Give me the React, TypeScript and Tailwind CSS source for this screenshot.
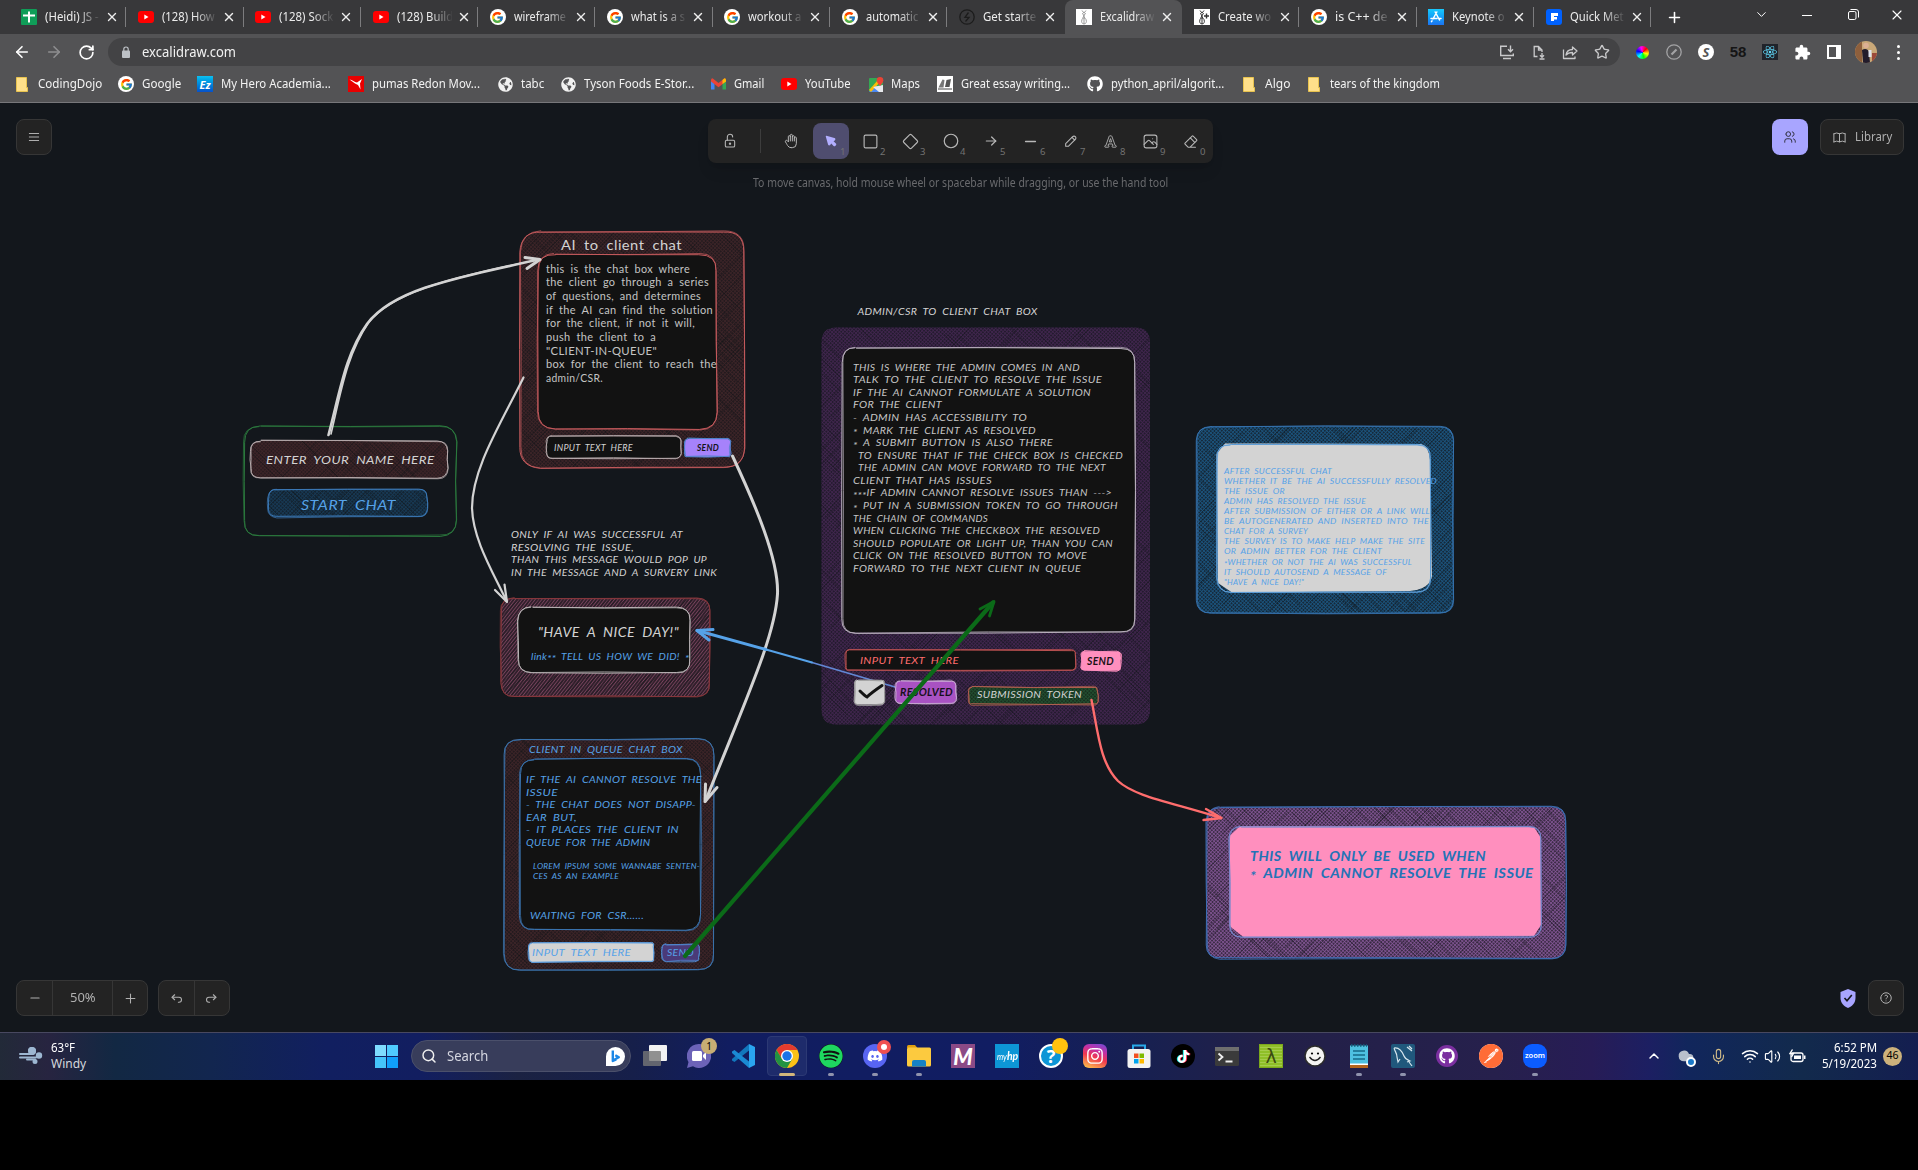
import React, { useLayoutEffect, useRef, useState } from "react";
import { FcGoogle } from "react-icons/fc";
import { FaFont, FaGithub, FaSpotify, FaDiscord, FaInstagram, FaTiktok, FaGlobeAmericas, FaReact } from "react-icons/fa";
import { MdExtension } from "react-icons/md";
import { SiPostman } from "react-icons/si";
import {
  TbLockOpen, TbHandStop, TbSquare, TbSquareRotated, TbCircle, TbArrowRight, TbMinus, TbPlus,
  TbPencil, TbPhoto, TbEraser, TbMenu2, TbUsers, TbBook, TbArrowBackUp, TbArrowForwardUp, TbHelp, TbPointerFilled,
} from "react-icons/tb";
import {
  ArrowLeft, ArrowRight, RotateCw, X, Plus, Minus, ChevronDown, ChevronUp, Star,
  Search, Wifi, Volume2, Mic, Cloud,
} from "lucide-react";

/* Single line of text squeezed or stretched to a given width. */
function Fit({ w, className = "", children }: { w: number; className?: string; children: React.ReactNode }) {
  const ref = useRef<HTMLSpanElement>(null);
  const [k, setK] = useState(1);
  useLayoutEffect(() => {
    if (ref.current && ref.current.offsetWidth) setK(w / ref.current.offsetWidth);
  }, [w]);
  return (
    <span className={"inline-block shrink-0 whitespace-nowrap " + className} style={{ width: w }}>
      <span ref={ref} className="inline-block origin-left" style={{ transform: `scaleX(${k})` }}>
        {children}
      </span>
    </span>
  );
}

/* ---------- small brand marks ---------- */
const GoogleDot = () => (
  <span className="flex size-4 items-center justify-center rounded-full bg-white"><FcGoogle size={13} /></span>
);
const YouTubeMark = () => (
  <svg width="16" height="16" viewBox="0 0 16 16"><rect y="2" width="16" height="12" rx="3" fill="#f00" /><path d="M6.3 5.5v5L10.5 8z" fill="#fff" /></svg>
);
const Sheets = () => (
  <svg width="16" height="16" viewBox="0 0 16 16"><rect width="16" height="16" rx="1" fill="#0f9d58" /><path d="M7 2.500h2v3h5v2H9v6H7v-6H2v-2h5z" fill="#fff" /></svg>
);
const Slash = () => (
  <svg width="16" height="16" viewBox="0 0 16 16" fill="none" stroke="#1c1c1c"><circle cx="8" cy="8" r="7.2" strokeWidth="1.300" /><path d="M9.500 3.500 6 8.300h4L6.500 12.500" strokeWidth="1.300" /></svg>
);
const Pen = ({ plus = false }: { plus?: boolean }) => (
  <svg width="16" height="16" viewBox="0 0 16 16" fill="none" stroke={plus ? "#333" : "#999"}>
    <rect width="16" height="16" fill="#fff" stroke="none" />
    <path d="M6 1.500 8 4l2-2.500M6.500 4 9 9.500M9.500 4 6.500 9.500M8 9v6M6 10.500c-1 3 0 4 2 4.500 2-.5 3-1.500 2-4.500l-2-2z" strokeWidth="1" />
    {plus && <path d="M10 7h5M12.500 4.500v5" strokeWidth="1.400" />}
  </svg>
);
const AppStore = () => (
  <span className="flex size-4 items-center justify-center bg-gradient-to-b from-[#1ac8fb] to-[#1d74f2] text-white">
    <svg width="12" height="12" viewBox="0 0 12 12" fill="none" stroke="#fff" strokeWidth="1.500" strokeLinecap="round"><path d="M6.800 1 3 8M5.200 1 9.500 9M1 7.500h6M9 7.500h2M2 9.800l-.5.800" /></svg>
  </span>
);
const FMark = () => (
  <svg width="16" height="16" viewBox="0 0 16 16"><rect width="16" height="16" rx="3" fill="#0061fe" /><path d="M5 4h7v3H8v1h3v2.500H8V12H5z" fill="#fff" /></svg>
);
const Folder = () => (
  <svg width="12" height="15" viewBox="0 0 12 15"><path d="M.5.500h10v10h1v4H.5z" fill="#ffe08a" stroke="#e8c34f" /></svg>
);
const GlobeMark = () => (
  <span className="flex size-4 items-center justify-center rounded-full"><FaGlobeAmericas size={15} color="#f1f1f1" /></span>
);
const EZ = () => (
  <span className="flex size-4 items-center justify-center bg-gradient-to-b from-[#10c0f0] to-[#0a50c8] text-[11px] font-bold italic leading-none text-white">Ez</span>
);
const Puma = () => (
  <svg width="16" height="16" viewBox="0 0 16 16"><rect width="16" height="16" fill="#e80000" /><path d="M1.500 3.500c3 0 5 3 7.500 3l5-3.500-2 4.500.5 6-2.500-4.500-3-1.500z" fill="#fff" /></svg>
);
const GmailMark = () => (
  <svg width="15" height="12" viewBox="0 0 15 12"><path d="M0 2v9.500h3.500V5z" fill="#4285f4" /><path d="M15 2v9.500h-3.500V5z" fill="#34a853" /><path d="M0 2Q0 .3 1.500.3L7.500 5l6-4.700Q15 .3 15 2v1.500L7.500 9.200 0 3.500z" fill="#ea4335" /><path d="M11.500 2 13.500.3Q15 .3 15 2v1.500L11.500 6z" fill="#fbbc04" /></svg>
);
const MapsMark = () => (
  <svg width="15" height="15" viewBox="0 0 15 15"><rect y="1" width="14" height="14" rx="1" fill="#34a853" /><path d="m0 15 7-7 7 7z" fill="#4a89f3" /><path d="m0 13 9-10 2 2-9 10z" fill="#fbbc05" /><path d="m4 10 6 5h4V8z" fill="#e8eaed" /><path d="M11 0a3.300 3.300 0 0 1 3.300 3.300C14.300 6 11 9 11 9S7.700 6 7.700 3.300A3.300 3.300 0 0 1 11 0z" fill="#ea4335" /></svg>
);
const Essay = () => (
  <svg width="16" height="16" viewBox="0 0 16 16"><rect width="16" height="16" fill="#fff" /><path d="m1.500 11.500 4-8 2 .5-1 7.500z" fill="#777" /><path d="m8 11 1.500-7 4.500-1-1.500 8z" fill="#555" /><path d="M1 12.500h14v1H1z" fill="#444" /></svg>
);

/* ---------- browser chrome ---------- */
const tabs: [React.ReactNode, string, number][] = [
  [<Sheets />, "(Heidi) JS -", 54], [<YouTubeMark />, "(128) How", 53], [<YouTubeMark />, "(128) Sock", 54],
  [<YouTubeMark />, "(128) Build", 56], [<GoogleDot />, "wireframe", 52], [<GoogleDot />, "what is a s", 54],
  [<GoogleDot />, "workout a", 53], [<GoogleDot />, "automatic", 52], [<Slash />, "Get starte", 53],
  [<Pen />, "Excalidraw", 54], [<Pen plus />, "Create wo", 53], [<GoogleDot />, "is C++ de", 53],
  [<AppStore />, "Keynote o", 53], [<FMark />, "Quick Met", 54],
];

function TabStrip() {
  return (
    <div className="flex h-[34px] bg-[#38383a] pl-[9px] text-[12.500px] text-[#ececec]">
      {tabs.map(([icon, label, w], i) => {
        const active = i === 9;
        return (
          <div key={i} className={"relative flex w-[117.300px] shrink-0 items-center pl-[11.700px] " + (active ? "rounded-t-lg bg-[#535355]" : "")}>
            <span className="shrink-0">{icon}</span>
            <div className="ml-2 w-[57px] shrink-0 overflow-hidden [mask-image:linear-gradient(to_right,#000_58%,transparent_98%)]">
              <Fit w={w}>{label}</Fit>
            </div>
            <X size={14} strokeWidth={2.400} className="ml-[3px] shrink-0" color="#eee" />
            {!active && i !== 8 && <div className="absolute right-0 top-[7px] h-5 w-px bg-[#7c7c7e]" />}
          </div>
        );
      })}
      <div className="flex w-[46px] items-center justify-center"><Plus size={17} strokeWidth={2.200} color="#fff" /></div>
      <div className="ml-auto flex h-[29px] items-center text-white">
        <div className="flex w-[46px] justify-center"><ChevronDown size={15} strokeWidth={1.600} /></div>
        <div className="flex w-[46px] justify-center"><svg width="10" height="10" viewBox="0 0 10 10"><path d="M0 5.500h10" stroke="#fff" /></svg></div>
        <div className="flex w-[46px] justify-center"><svg width="11" height="11" viewBox="0 0 11 11" fill="none" stroke="#fff"><rect x=".5" y="2.500" width="7.500" height="8" rx="1.500" /><path d="M2.500.500h5.500a2.500 2.500 0 0 1 2.500 2.500v5.500" /></svg></div>
        <div className="flex w-[42px] justify-center"><X size={16} strokeWidth={1.700} /></div>
      </div>
    </div>
  );
}

const wheel = "bg-[conic-gradient(#f00,#ff0,#0f0,#0ff,#00f,#f0f,#f00)]";

function AddressRow() {
  return (
    <div className="flex h-9 items-center bg-[#535355] pl-[13px] text-white">
      <ArrowLeft size={18} strokeWidth={2.200} />
      <ArrowRight size={18} strokeWidth={2.200} color="#8e8e90" className="ml-[14px]" />
      <RotateCw size={17} strokeWidth={2.400} className="ml-[15px]" />
      <div className="ml-[13px] flex h-7 w-[1512px] items-center rounded-full bg-[#434345] pl-[14px] pr-[10px]">
        <svg width="8" height="12" viewBox="0 0 8 12"><rect y="4.500" width="8" height="7.500" rx="1" fill="#bdc1c6" /><path d="M1.800 5V3.200a2.200 2.200 0 0 1 4.400 0V5" fill="none" stroke="#bdc1c6" strokeWidth="1.200" /></svg>
        <Fit w={94} className="ml-3 text-sm text-[#f1f1f1]">excalidraw.com</Fit>
        <div className="ml-auto flex items-center gap-4 text-[#c9c9cb]">
          <svg width="16" height="15" viewBox="0 0 16 15" fill="none" stroke="currentColor" strokeWidth="1.400"><path d="M8 1.200H1.700v9.300h12.600V8.500M11.500.500v6M9 4.300l2.500 2.500L14 4.300M4 13.500h8" /></svg>
          <svg width="15" height="15" viewBox="0 0 15 15" fill="none" stroke="currentColor" strokeWidth="1.300"><path d="M6.500 11.500H3.200v-10h4.300L11 5v2M7.500 1.500V5H11M11 8v4M9 10.300l2 2 2-2M8.500 14h5" /></svg>
          <svg width="16" height="15" viewBox="0 0 16 15" fill="none" stroke="currentColor" strokeWidth="1.300" strokeLinejoin="round"><path d="M1.500 4.500v9h11.500V11.500M4 10c.5-3.500 3-5.500 6.500-5.500V2L15 6l-4.500 4V7.500C7.500 7.500 5.500 8.300 4 10z" /></svg>
          <Star size={16} strokeWidth={2} />
        </div>
      </div>
      <div className="ml-[6px] flex items-center">
        <div className="flex w-8 justify-center"><span className={"size-[13px] rotate-45 rounded-full " + wheel} /></div>
        <div className="flex w-8 justify-center"><svg width="16" height="16" viewBox="0 0 16 16" fill="none" stroke="#a3a3a5"><circle cx="8" cy="8" r="7.200" strokeWidth="1.300" /><path d="m5.500 10.500 5-5" strokeWidth="2.200" /></svg></div>
        <div className="flex w-8 justify-center"><span className="flex size-4 items-center justify-center rounded-full bg-white text-[13px] font-bold italic leading-none text-[#555]">S</span></div>
        <div className="flex w-8 justify-center font-['Liberation_Sans'] text-[15px] font-bold text-[#151515]">58</div>
        <div className="flex w-8 justify-center"><span className="flex size-4 items-center justify-center bg-[#20232a]"><FaReact size={14} color="#61dafb" /></span></div>
        <div className="flex w-8 justify-center"><MdExtension size={17} color="#fff" /></div>
        <div className="flex w-8 justify-center"><span className="h-[14px] w-[14px] border-2 border-r-[5px] border-white" /></div>
        <div className="flex w-8 justify-center">
          <svg width="22" height="22" viewBox="0 0 22 22"><clipPath id="av"><circle cx="11" cy="11" r="11" /></clipPath><g clipPath="url(#av)"><rect width="22" height="22" fill="#c9a878" /><path d="M0 0h7v22H0z" fill="#8e5f3c" /><circle cx="11" cy="4.500" r="2.800" fill="#dcb094" /><path d="M7 9c3-2 6-1 7 2l1 11H8z" fill="#221c2c" /><path d="M13.500 9h3v7h-3z" fill="#dfe3ee" /><path d="M17 12h5v10h-5z" fill="#9c4a3a" /></g></svg>
        </div>
        <div className="flex w-8 flex-col items-center gap-[3px]"><i className="size-[3px] rounded-full bg-white" /><i className="size-[3px] rounded-full bg-white" /><i className="size-[3px] rounded-full bg-white" /></div>
      </div>
    </div>
  );
}

const bookmarks: [React.ReactNode, string, number, number, number][] = [
  /* icon, label, icon cell width, text width, gap after */
  [<Folder />, "CodingDojo", 22, 64, 16], [<GoogleDot />, "Google", 24, 39, 16], [<EZ />, "My Hero Academia...", 24, 110, 17],
  [<Puma />, "pumas Redon Mov...", 24, 108, 17], [<GlobeMark />, "tabc", 24, 23, 16], [<GlobeMark />, "Tyson Foods E-Stor...", 24, 110, 17],
  [<GmailMark />, "Gmail", 23, 30, 17], [<YouTubeMark />, "YouTube", 24, 46, 18], [<MapsMark />, "Maps", 22, 29, 17],
  [<Essay />, "Great essay writing...", 24, 109, 17], [<FaGithub size={16} color="#fff" />, "python_april/algorit...", 24, 113, 19],
  [<Folder />, "Algo", 22, 25, 18], [<Folder />, "tears of the kingdom", 22, 110, 0],
];

function Bookmarks() {
  return (
    <div className="flex h-[33px] items-center border-b border-[#77777a] bg-[#535355] pb-[4px] pl-4 text-[12.500px] text-[#f3f3f3]">
      {bookmarks.map(([icon, label, iw, tw, gap], i) => (
        <div key={i} className="flex shrink-0 items-center" style={{ marginRight: gap }}>
          <span className="flex shrink-0 items-center" style={{ width: iw }}>{icon}</span>
          <Fit w={tw}>{label}</Fit>
        </div>
      ))}
    </div>
  );
}

/* ---------- whiteboard drawing ---------- */
function rng(seed: number) {
  let s = seed * 9301 + 49297;
  return () => {
    s = (s * 9301 + 49297) % 233280;
    return s / 233280 - 0.5;
  };
}

function roughPath(x: number, y: number, x2: number, y2: number, r: number, seed: number, amp: number) {
  const q = rng(seed);
  const j = () => q() * amp;
  const mx = (x + x2) / 2, my = (y + y2) / 2;
  return `M${x + r + j()} ${y + j()}Q${mx} ${y + j() * 2} ${x2 - r + j()} ${y + j()}Q${x2 + j()} ${y + j()} ${x2 + j()} ${y + r + j()}Q${x2 + j() * 2} ${my} ${x2 + j()} ${y2 - r + j()}Q${x2 + j()} ${y2 + j()} ${x2 - r + j()} ${y2 + j()}Q${mx} ${y2 + j() * 2} ${x + r + j()} ${y2 + j()}Q${x + j()} ${y2 + j()} ${x + j()} ${y2 - r + j()}Q${x + j() * 2} ${my} ${x + j()} ${y + r + j()}Q${x + j()} ${y + j()} ${x + r + j()} ${y + j()}`;
}

type BoxProps = { b: [number, number, number, number]; r?: number; stroke?: string; fill?: string; hatch?: string; seed?: number; streaks?: number; single?: boolean };

function Box({ b: [x, y, x2, y2], r = 12, stroke = "none", fill = "none", hatch, seed = 1, streaks = 0, single }: BoxProps) {
  const q = rng(seed + 40);
  const id = `clip${seed}`;
  return (
    <g>
      <path d={roughPath(x, y, x2, y2, r, seed, 0)} fill={fill} />
      {hatch && <path d={roughPath(x, y, x2, y2, r, seed, 0)} fill={`url(#${hatch})`} />}
      {streaks > 0 && (
        <g clipPath={`url(#${id})`}>
          <clipPath id={id}><path d={roughPath(x, y, x2, y2, r, seed, 0)} /></clipPath>
          {Array.from({ length: streaks }, (_, i) => {
            const cx = x + (q() + 0.5) * (x2 - x), cy = y + (q() + 0.5) * (y2 - y);
            const l = 12 + (q() + 0.5) * 30;
            const d = single || i % 2 ? 1 : -1;
            return <path key={i} d={`M${cx - l} ${cy + l * d}L${cx + l} ${cy - l * d}`} stroke="#14171b" strokeOpacity=".42" strokeWidth="1" />;
          })}
        </g>
      )}
      {stroke !== "none" && (
        <g fill="none" stroke={stroke} strokeWidth="1">
          <path d={roughPath(x, y, x2, y2, r, seed + 2, 1.600)} />
          <path d={roughPath(x, y, x2, y2, r, seed + 7, 2)} strokeOpacity=".75" />
        </g>
      )}
    </g>
  );
}

function Hatch({ id, c, single, w = 1 }: { id: string; c: string; single?: boolean; w?: number }) {
  return (
    <pattern id={id} width="2.600" height="2.600" patternUnits="userSpaceOnUse" patternTransform={single ? "rotate(38)" : "rotate(43)"}>
      <path d="M0 0V2.600" stroke={c} strokeWidth={w * 1.600} />
      {!single && <path d="M0 0H2.600" stroke={c} strokeWidth={w * 1.600} />}
    </pattern>
  );
}

/* Lines are [text, start x, end x, baseline]. Asterisks sit at mid height of the capitals. */
type Line = [string, number, number, number];
function Lines({ rows, size, fill, bold, upright }: { rows: Line[]; size: number; fill: string; bold?: boolean; upright?: boolean }) {
  const drop = size * 0.26;
  return (
    <g fill={fill} fontSize={size * 0.95} fontFamily="Lato, sans-serif" fontStyle={upright ? "normal" : "italic"} fontWeight={bold ? 700 : 400} wordSpacing={size * 0.24} letterSpacing={size * 0.03}>
      {rows.map(([t, x, x2, y], i) => (
        <text key={i} x={x} y={y + 0.5} textLength={x2 - x} lengthAdjust="spacingAndGlyphs">
          {t.includes("*")
            ? t.split(/(\*+)/).filter(Boolean).map((p, k, all) => (
                <tspan key={k} dy={p[0] === "*" ? drop : k > 0 && all[k - 1][0] === "*" ? -drop : 0}>{p}</tspan>
              ))
            : t}
        </text>
      ))}
    </g>
  );
}

const adminRows: Line[] = ([
  ["THIS IS WHERE THE ADMIN COMES IN AND", 853, 1080], ["TALK TO THE CLIENT TO RESOLVE THE ISSUE", 853, 1102],
  ["IF THE AI CANNOT FORMULATE A SOLUTION", 853, 1091], ["FOR THE CLIENT", 853, 942], ["- ADMIN HAS ACCESSIBILITY TO", 853, 1027],
  ["* MARK THE CLIENT AS RESOLVED", 853, 1036], ["* A SUBMIT BUTTON IS ALSO THERE", 853, 1053],
  ["TO ENSURE THAT IF THE CHECK BOX IS CHECKED", 858, 1123], ["THE ADMIN CAN MOVE FORWARD TO THE NEXT", 858, 1106],
  ["CLIENT THAT HAS ISSUES", 853, 992], ["***IF ADMIN CANNOT RESOLVE ISSUES THAN --->", 853, 1112],
  ["* PUT IN A SUBMISSION TOKEN TO GO THROUGH", 853, 1118], ["THE CHAIN OF COMMANDS", 853, 988],
  ["WHEN CLICKING THE CHECKBOX THE RESOLVED", 853, 1100], ["SHOULD POPULATE OR LIGHT UP, THAN YOU CAN", 853, 1113],
  ["CLICK ON THE RESOLVED BUTTON TO MOVE", 853, 1087], ["FORWARD TO THE NEXT CLIENT IN QUEUE", 853, 1081],
] as [string, number, number][]).map(([t, a, b], i) => [t, a, b, 370.300 + i * 12.560]);

const surveyRows: Line[] = ([
  ["AFTER SUCCESSFUL CHAT", 1332], ["WHETHER IT BE THE AI SUCCESSFULLY RESOLVED", 1437], ["THE ISSUE OR", 1285],
  ["ADMIN HAS RESOLVED THE ISSUE", 1366], ["AFTER SUBMISSION OF EITHER OR A LINK WILL", 1430], ["BE AUTOGENERATED AND INSERTED INTO THE", 1429],
  ["CHAT FOR A SURVEY", 1308], ["THE SURVEY IS TO MAKE HELP MAKE THE SITE", 1425], ["OR ADMIN BETTER FOR THE CLIENT", 1382],
  ["*WHETHER OR NOT THE AI WAS SUCCESSFUL", 1412], ["IT SHOULD AUTOSEND A MESSAGE OF", 1387], ["\"HAVE A NICE DAY!\"", 1304],
] as [string, number][]).map(([t, b], i) => [t, 1224, b, 473 + i * 10.120]);

const aiRows: Line[] = ([
  ["this is the chat box where", 690], ["the client go through a series", 709], ["of questions, and determines", 701],
  ["if the AI can find the solution", 713], ["for the client, if not it will,", 695], ["push the client to a", 656],
  ["\"CLIENT-IN-QUEUE\"", 657], ["box for the client to reach the", 717], ["admin/CSR.", 603],
] as [string, number][]).map(([t, b], i) => [t, 546, b, 272 + i * 13.700]);

const PALE = "#d3d3d3";
const BLUE = "#56a2e8";

function Drawing() {
  return (
    <svg className="block h-[929px] w-[1918px]" viewBox="0 103 1918 929">
      <defs>
        <Hatch id="hRed" c="#3e2428" />
        <Hatch id="hBlue" c="#173a56" />
        <Hatch id="hBlue2" c="#1b5580" />
        <Hatch id="hPurple" c="#42264f" />
        <Hatch id="hViolet" c="#8a5a9d" w={0.850} />
        <Hatch id="hPink" c="#7d4560" single />
        <Hatch id="hGreen" c="#225030" />
      </defs>

      <Box b={[244, 426, 456, 536]} r={16} stroke="#2b7a3d" seed={3} />
      <Box b={[250.500, 441, 447.500, 478]} r={10} fill="#2a1c20" hatch="hRed" stroke="#b5a9ab" seed={5} streaks={30} />
      <Lines rows={[["ENTER YOUR NAME HERE", 266, 434.500, 463]]} size={12.500} fill={PALE} />
      <Box b={[268.500, 489, 427, 517]} r={8} fill="#142433" hatch="hBlue" stroke="#3b78b5" seed={6} streaks={24} />
      <Lines rows={[["START CHAT", 301, 396, 509]]} size={13.500} fill={BLUE} />

      <Box b={[520.500, 231.500, 744, 467.500]} r={20} fill="#231a1e" hatch="hRed" stroke="#c45a5c" seed={11} streaks={110} />
      <Lines rows={[["AI to client chat", 561, 682, 249.500]]} size={14.500} fill={PALE} upright />
      <Box b={[538, 254, 716.500, 429]} r={17} fill="#121212" stroke="#c4595c" seed={12} />
      <Lines rows={aiRows} size={11.500} fill="#c4c4c4" upright />
      <Box b={[546.500, 436.500, 680.500, 458]} r={5} fill="#121212" stroke="#b5a9ab" seed={14} />
      <Lines rows={[["INPUT TEXT HERE", 554, 633, 450.500]]} size={9} fill={PALE} />
      <Box b={[685, 439, 730.500, 457]} r={3} fill="#a682fb" stroke="#4f82c9" seed={15} />
      <Lines rows={[["SEND", 697, 719, 450]]} size={9} fill="#141318" bold />

      <Lines size={11} fill={PALE} rows={[
        ["ONLY IF AI WAS SUCCESSFUL AT", 511, 683, 537], ["RESOLVING THE ISSUE,", 511, 634, 550],
        ["THAN THIS MESSAGE WOULD POP UP", 511, 707, 562.500], ["IN THE MESSAGE AND A SURVERY LINK", 511, 717, 575],
      ]} />
      <Box b={[501, 598, 710, 696]} r={13} fill="#30202b" hatch="hPink" stroke="#87373c" seed={21} streaks={80} single />
      <Box b={[518, 607, 690.500, 673]} r={14} fill="#121212" stroke="#b9b3b5" seed={22} />
      <Lines rows={[["\"HAVE A NICE DAY!\"", 538, 679, 636.500]]} size={14.500} fill={PALE} />
      <Lines rows={[["link** TELL US HOW WE DID! *", 531, 689.500, 659]]} size={11} fill={BLUE} />

      <Box b={[504, 739, 714, 970]} r={16} fill="#231a1e" hatch="hRed" stroke="#3a71aa" seed={31} streaks={100} />
      <Lines rows={[["CLIENT IN QUEUE CHAT BOX", 529, 683, 752]]} size={11} fill={BLUE} />
      <Box b={[520, 759, 701, 930]} r={15} fill="#121212" stroke="#3a73ae" seed={32} />
      <Lines size={11} fill={BLUE} rows={[
        ["IF THE AI CANNOT RESOLVE THE", 526, 702, 782], ["ISSUE", 526, 558, 795], ["- THE CHAT DOES NOT DISAPP-", 526, 696, 807.500],
        ["EAR BUT,", 526, 577, 820], ["- IT PLACES THE CLIENT IN", 526, 679, 832.500], ["QUEUE FOR THE ADMIN", 526, 650.500, 845],
        ["WAITING FOR CSR......", 530, 644, 918],
      ]} />
      <Lines size={8.500} fill={BLUE} rows={[["LOREM IPSUM SOME WANNABE SENTEN-", 533, 700, 868.500], ["CES AS AN EXAMPLE", 533, 619, 878.500]]} />
      <Box b={[529, 943, 654, 962]} r={3} fill={PALE} stroke="#5d9fe0" seed={33} />
      <Lines rows={[["INPUT TEXT HERE", 532, 631, 955]]} size={11} fill={BLUE} />
      <Box b={[662, 944, 699, 961]} r={4} fill="#4a3a78" stroke="#4f86cc" seed={35} />
      <Lines rows={[["SEND", 667, 694, 955.500]]} size={11} fill={BLUE} />

      <Lines rows={[["ADMIN/CSR TO CLIENT CHAT BOX", 857.500, 1037.500, 314.500]]} size={10.800} fill={PALE} />
      <Box b={[821.500, 327.500, 1150, 724.500]} r={15} fill="#231b2e" hatch="hPurple" seed={41} streaks={180} />
      <Box b={[842, 348, 1135, 632.500]} r={14} fill="#121212" stroke="#b9b0bd" seed={42} />
      <Lines rows={adminRows} size={10.600} fill="#c6c6c6" />
      <Box b={[845.500, 650, 1076, 670]} r={4} fill="#121212" stroke="#bd5252" seed={43} />
      <Lines rows={[["INPUT TEXT HERE", 860, 959, 663.500]]} size={10.500} fill="#ff6d6d" />
      <Box b={[1081.500, 651.500, 1120.500, 670.500]} r={3} fill="#ff8fbe" stroke="#ff8fbe" seed={44} />
      <Lines rows={[["SEND", 1087, 1114, 664]]} size={11} fill="#1a1216" bold />

      <Box b={[1197, 426.500, 1453.500, 613.500]} r={14} fill="#16293a" hatch="hBlue2" stroke="#3572ad" seed={51} streaks={90} />
      <path d="M1225 443.500 1421 444Q1429 446 1430 460L1432 576Q1430 589 1410 591L1232 592.500 1218 583 1216.500 454Z" fill={PALE} />
      <Box b={[1217, 444.500, 1430.500, 592]} r={14} stroke="#5d9ed8" seed={52} />
      <Lines rows={surveyRows} size={8.800} fill={BLUE} />

      <Box b={[1206.500, 807, 1565.500, 958.500]} r={14} fill="#3b2b45" hatch="hViolet" stroke="#3c6fb5" seed={61} streaks={120} />
      <path d="M1240 826 1534 827 1541 838V925L1534 936 1244 937.500 1229.500 926V836Z" fill="#ff8fbe" />
      <Box b={[1229.500, 827, 1541, 937]} r={12} stroke="#7588cc" seed={62} />
      <Lines size={14} fill="#2373b6" bold rows={[["THIS WILL ONLY BE USED WHEN", 1250, 1486, 860], ["* ADMIN CANNOT RESOLVE THE ISSUE", 1250, 1533.500, 877]]} />

      {/* connectors */}
      <g fill="none" stroke={PALE} strokeWidth="2.600" strokeLinecap="round" strokeLinejoin="round">
        <path d="M328.500 435C340 392 345 355 367 324C391 292 440 281 539 259.500" />
        <path d="M331 434C341 392 347 354 369 322C392 294 441 280 520 263.500" strokeWidth="1.600" />
        <path d="M525 257.500 540 259.500 527 268.500" strokeWidth="3" />
        <path d="M523.500 377.500C500 425 472 469 472 508C473 540 493 572 506.500 601" strokeWidth="2.200" />
        <path d="M495 590 507 602 504.500 584.500" strokeWidth="2.200" />
        <path d="M732.500 456C755 504 779 560 777.500 594C775 636 748 694 705.500 801" strokeWidth="3" />
        <path d="M705.500 784 705 801.500 717 787.500" strokeWidth="3" />
      </g>
      <g fill="none" stroke={BLUE} strokeLinecap="round" strokeLinejoin="round">
        <path d="M895 687 812 662.500" stroke="#6287d4" strokeWidth="1.800" />
        <path d="M812 662.500 766 649.500" strokeWidth="2" />
        <path d="M766 649.500 697 630.500" strokeWidth="3" />
        <path d="M713 629.500 697 630.500 709 640" strokeWidth="3" />
      </g>
      <Box b={[854.500, 680, 884, 704.500]} r={3} fill={PALE} stroke="#9c9c9c" seed={71} />
      <path d="M860 691Q865 696 867 697Q871 693 882 685.500" fill="none" stroke="#141414" strokeWidth="3" strokeLinecap="round" />
      <Box b={[895.500, 681, 956, 703.500]} r={5} fill="#a852c2" stroke="#c7a6d2" seed={72} />
      <Lines rows={[["RESOLVED", 900, 953, 695]]} size={11} fill="#17101c" bold />
      <Box b={[969, 687, 1097.500, 704.500]} r={3} fill="#19301f" hatch="hGreen" stroke="#b0604f" seed={73} />
      <Lines rows={[["SUBMISSION TOKEN", 977, 1082, 697]]} size={11} fill={PALE} />
      <g fill="none" stroke="#ff6d6d" strokeWidth="2.400" strokeLinecap="round" strokeLinejoin="round">
        <path d="M1091.500 700C1098 732 1100 763 1118 781C1135 797 1175 803 1221 818" />
        <path d="M1206 809 1221.500 818 1203.500 820" />
      </g>
      <g fill="none" stroke="#0b6a18" strokeLinecap="round" strokeLinejoin="round">
        <path d="M685 956 993 602.500" strokeWidth="4.200" />
        <path d="M980 609 994 601.500 989.500 616" strokeWidth="2.800" />
      </g>
    </svg>
  );
}

/* ---------- whiteboard controls ---------- */
const island = "bg-[#232323]";
const btn = "flex items-center justify-center rounded-lg border border-[#363636] bg-[#232323] text-[#b0b0b0]";

const tools: [React.ReactNode, string][] = [
  [<TbHandStop size={16} strokeWidth={1.500} />, ""], [<TbPointerFilled size={14} color="#b2aeff" />, "1"], [<TbSquare size={17} strokeWidth={1.600} />, "2"],
  [<TbSquareRotated size={17} strokeWidth={1.600} />, "3"], [<TbCircle size={18} strokeWidth={1.600} />, "4"], [<TbArrowRight size={16} strokeWidth={1.800} />, "5"],
  [<TbMinus size={17} strokeWidth={1.800} />, "6"], [<TbPencil size={16} strokeWidth={1.600} />, "7"],
  [<FaFont size={13} className="fill-none stroke-[#b8b8b8] stroke-[34]" />, "8"], [<TbPhoto size={17} strokeWidth={1.500} />, "9"], [<TbEraser size={17} strokeWidth={1.500} />, "0"],
];

function BoardControls() {
  return (
    <div className="absolute inset-0 flex flex-col justify-between py-4 pl-4 pr-[14px]">
      <div className="grid grid-cols-[1fr_auto_1fr] items-start">
        <button className={btn + " size-9"}><TbMenu2 size={14} strokeWidth={1.700} /></button>
        <div className="flex flex-col items-center">
          <div className={"flex h-11 w-[505px] items-center rounded-lg px-1 text-[#b8b8b8] shadow-lg " + island}>
            <div className="flex size-9 items-center justify-center"><TbLockOpen size={16} strokeWidth={1.600} /></div>
            <div className="mx-3 h-6 w-px bg-[#3d3d3d]" />
            <div className="flex gap-1">
              {tools.map(([icon, key], i) => (
                <div key={i} className={"relative flex size-9 items-center justify-center rounded-lg " + (i === 1 ? "bg-[#4f4d6f]" : "")}>
                  {icon}
                  <span className="absolute bottom-[3px] right-[3px] text-[9.500px] leading-none text-[#737373]">{key}</span>
                </div>
              ))}
            </div>
          </div>
          <Fit w={415} className="mt-[12px] text-[12.500px] leading-4 text-[#696a6d]">To move canvas, hold mouse wheel or spacebar while dragging, or use the hand tool</Fit>
        </div>
        <div className="flex justify-end gap-3">
          <button className="flex size-9 items-center justify-center rounded-lg bg-[#a8a5ff] text-[#232329]"><TbUsers size={14} strokeWidth={1.500} /></button>
          <button className={btn + " h-9 w-[84px] gap-2"}><TbBook size={15} strokeWidth={1.600} /><Fit w={37} className="text-xs">Library</Fit></button>
        </div>
      </div>
      <div className="flex items-center">
        <div className={btn + " h-9 w-[132px] overflow-hidden"}>
          <span className="flex h-full w-[35px] items-center justify-center"><TbMinus size={14} /></span>
          <span className="flex h-full w-[61px] items-center justify-center border-x border-[#363636]"><Fit w={26} className="text-[12.500px]">50%</Fit></span>
          <span className="flex h-full w-[34px] items-center justify-center"><TbPlus size={15} strokeWidth={1.700} /></span>
        </div>
        <div className={btn + " ml-[10px] h-9 w-[72px]"}>
          <span className="flex h-full flex-1 items-center justify-center border-r border-[#363636]"><TbArrowBackUp size={15} strokeWidth={1.700} /></span>
          <span className="flex h-full flex-1 items-center justify-center"><TbArrowForwardUp size={15} strokeWidth={1.700} /></span>
        </div>
        <svg className="ml-auto" width="16" height="19" viewBox="0 0 16 19"><path d="M8 0 15.500 3v6c0 5-3.500 8.500-7.500 10C4 17.500.5 14 .5 9V3z" fill="#a8a5ff" /><path d="m4.500 9 2.500 2.800L11.800 6" fill="none" stroke="#14171b" strokeWidth="1.600" /></svg>
        <button className={btn + " ml-3 size-9"}><TbHelp size={14} strokeWidth={1.700} /></button>
      </div>
    </div>
  );
}

/* ---------- taskbar ---------- */
const Chrome = () => (
  <svg width="24" height="24" viewBox="0 0 24 24"><circle cx="12" cy="12" r="12" fill="#fbc116" /><path d="M1.600 6A12 12 0 0 1 22.400 6H12L7 15z" fill="#e33b2e" /><path d="M1.600 6A12 12 0 0 0 12 24l5.200-9L7 15z" fill="#229342" /><circle cx="12" cy="12" r="6" fill="#fff" /><circle cx="12" cy="12" r="4.700" fill="#1a73e8" /></svg>
);
const VSCode = () => (
  <svg width="24" height="24" viewBox="0 0 24 24"><path d="M18 0 24 3v18l-6 3z" fill="#2aa5f0" /><path d="M18 6.500 3.500 18 1 16.500v-1.500L18 0z" fill="#1277bd" /><path d="M18 17.500 3.500 6 1 7.500V9l17 15z" fill="#1a8ad4" /></svg>
);
const apps: { icon: React.ReactNode; run?: boolean; active?: boolean }[] = [
  { icon: <svg width="24" height="24" viewBox="0 0 24 24"><rect x="6" y="1" width="18" height="16" rx="1" fill="#f2f2f2" /><rect y="7" width="18" height="15" rx="1" fill="#777" fillOpacity=".8" /></svg> },
  { icon: <span className="relative"><svg width="24" height="24" viewBox="0 0 24 24"><path d="M12 0a12 12 0 1 1-6 22.300L0 24l1.500-6A12 12 0 0 1 12 0z" fill="#6c63b8" /><rect x="5" y="7" width="10" height="10" rx="1.500" fill="#fff" /><path d="m16 11 3-3v8l-3-3z" fill="#fff" /></svg><span className="absolute -right-[6px] -top-[6px] flex size-4 items-center justify-center rounded-full bg-[#c8ae74] text-[10px] text-black">1</span></span> },
  { icon: <VSCode /> },
  { icon: <Chrome />, run: true, active: true },
  { icon: <span className="rounded-full bg-[#111]"><FaSpotify size={24} color="#1ed760" /></span>, run: true },
  { icon: <span className="relative flex size-6 items-center justify-center rounded-full bg-[#5865f2]"><FaDiscord size={16} color="#fff" /><span className="absolute -right-[4px] -top-[4px] flex size-[14px] items-center justify-center rounded-full bg-[#f05050]"><i className="size-[6px] rounded-full bg-white" /></span></span>, run: true },
  { icon: <svg width="24" height="22" viewBox="0 0 24 22"><path d="M0 1.500Q0 0 1.500 0H8l2.500 3H0z" fill="#e0a010" /><rect y="2.500" width="24" height="19" rx="1.500" fill="#fcca3f" /><path d="M5 21.500V17q0-2 2-2h10q2 0 2 2v4.500z" fill="#1782c5" /></svg>, run: true },
  { icon: <span className="flex size-6 items-center justify-center bg-[#8b4a86] font-['Lato'] text-[22px] font-black italic text-white">M</span> },
  { icon: <span className="flex size-6 items-center justify-center bg-[#0d96d6] font-['Lato'] text-white"><Fit w={21} className="text-[9px] italic">my<b className="text-[12px]">hp</b></Fit></span> },
  { icon: <span className="relative flex size-6 items-center justify-center rounded-full border-2 border-white bg-[#0d96d6] text-lg font-bold text-white">?<span className="absolute -right-[7px] -top-[8px] size-4 rounded-full bg-[#ffc20e]" /></span> },
  { icon: <span className="flex size-6 items-center justify-center rounded-md bg-[linear-gradient(20deg,#fdc04c_5%,#f0374e_45%,#c430a5_70%,#6b4fd8)]"><FaInstagram size={18} color="#fff" /></span> },
  { icon: <svg width="24" height="24" viewBox="0 0 24 24"><path d="M6 6V1.500h12V6" fill="none" stroke="#29a9ea" strokeWidth="2" /><rect x=".5" y="5" width="23" height="19" rx="2.500" fill="#f3f3f3" /><path d="M7 9.500h4.500V14H7z" fill="#f25022" /><path d="M12.500 9.500H17V14h-4.500z" fill="#7fba00" /><path d="M7 15h4.500v4.500H7z" fill="#00a4ef" /><path d="M12.500 15H17v4.500h-4.500z" fill="#ffb900" /></svg> },
  { icon: <span className="flex size-6 items-center justify-center rounded-full bg-black"><FaTiktok size={13} color="#fff" className="[filter:drop-shadow(-1px_0_0_#25f4ee)_drop-shadow(1px_0_0_#fe2c55)]" /></span> },
  { icon: <svg width="24" height="19" viewBox="0 0 24 19"><rect width="24" height="19" rx="1.500" fill="#3b3b3b" /><rect width="24" height="4" fill="#6e6e6e" /><path d="m3.500 6.500 4 3.500-4 3.500M10.500 14.500h7" fill="none" stroke="#f0f0f0" strokeWidth="1.800" /></svg> },
  { icon: <span className="flex size-6 items-center justify-center border border-[#7ca81c] bg-[repeating-linear-gradient(#8fbf28_0_2px,#a5cc4c_2px_3px)] font-['DejaVu_Sans'] text-[19px] leading-none text-[#3a4a12]">λ</span> },
  { icon: <svg width="22" height="22" viewBox="0 0 22 22"><circle cx="11" cy="11" r="10" fill="#f4f4f2" stroke="#2c2c2c" strokeWidth="1.500" /><circle cx="8" cy="8.500" r="1.100" /><circle cx="14" cy="8.500" r="1.100" /><path d="M5.500 12q5.500 7 11 0" fill="none" stroke="#222" strokeWidth="1.300" /></svg> },
  { icon: <svg width="20" height="24" viewBox="0 0 20 24"><rect x="1" y="1.500" width="18" height="20" fill="#4ec0e0" /><path d="M1 20.500h18V24H1z" fill="#b5651d" /><path d="M1 19.500h18v1.500H1z" fill="#fff" /><path d="M4 7h12M4 11h12M4 15h12" stroke="#166a86" strokeWidth="1.600" /><path d="M2 1.500h16" stroke="#125e7c" strokeWidth="2.500" strokeDasharray="1.500 1.500" /></svg>, run: true },
  { icon: <svg width="24" height="24" viewBox="0 0 24 24"><rect width="24" height="24" rx="2" fill="#20587c" /><path d="M3 4c5-1 8 3 10 8 1 3 4 4 6 5l-3 1M3 4c1 4 3 5 3 9l1 5 2-3M16 3l5 4M18 2l3 3M18 18l3 4" fill="none" stroke="#d6e6ee" strokeWidth="1.200" /></svg>, run: true },
  { icon: <span className="flex size-[22px] items-center justify-center rounded-full bg-[#7b2fa0]"><FaGithub size={16} color="#fff" /></span> },
  { icon: <span className="rounded-full bg-white"><SiPostman size={24} color="#ff6c37" /></span> },
  { icon: <span className="flex size-6 items-center justify-center rounded-[9px] bg-[#0b5cff] text-[7.500px] font-semibold text-white">zoom</span>, run: true },
];

function Taskbar() {
  return (
    <div className="relative flex h-12 items-center border-t border-[#484860] bg-[linear-gradient(to_right,#222a38_0%,#272440_2.500%,#122843_6%,#12264f_11%,#111f60_17%,#121e60_22%,#1b2242_27%,#161f4a_33%,#111d60_38%,#111d62_52%,#182050_60%,#222048_66%,#26204c_78%,#271c56_83%,#1c1f62_86%,#11265c_88%,#122a4c_94%,#141e50_100%)] pb-px text-white">
      <div className="ml-[19px] flex w-[356px] items-center">
        <svg width="24" height="18" viewBox="0 0 24 18" fill="none" stroke="#9db7d2" strokeWidth="2" strokeLinecap="round"><path d="M1 7h11M1 10.500h16M13 7a3 3 0 1 0-3-3.500" /><circle cx="13" cy="4" r="3" fill="#9db7d2" /><circle cx="20" cy="8.500" r="2.200" fill="#9db7d2" /><path d="M8 12.500h8" /><circle cx="16" cy="14.500" r="1.500" fill="#9db7d2" /></svg>
        <div className="ml-2 flex flex-col text-xs leading-4"><Fit w={24}>63°F</Fit><Fit w={35} className="text-[#d5d8de]">Windy</Fit></div>
      </div>
      <div className="grid grid-cols-2 gap-px"><i className="size-[11px] bg-[#7fdcff]" /><i className="size-[11px] bg-[#4fcbff]" /><i className="size-[11px] bg-[#45c4fb]" /><i className="size-[11px] bg-[#109ffb]" /></div>
      <div className="ml-[13px] flex h-8 w-[220px] items-center rounded-full border border-[#4b506b] bg-[#383d5b] pl-[9px] pr-[5px]">
        <Search size={16} strokeWidth={2.200} color="#eee" />
        <Fit w={41} className="ml-[10px] text-sm text-[#d4d6e0]">Search</Fit>
        <svg className="ml-auto" width="19" height="19" viewBox="0 0 19 19"><path d="M9.500 0a9.500 9.500 0 1 1 0 19H0V9.500A9.500 9.500 0 0 1 9.500 0z" fill="#fff" /><path d="M6.800 3.500v10.500l3.500-1.500M6.800 13.500l6-3.300-3.500-2" fill="none" stroke="#1b87e6" strokeWidth="2.400" strokeLinejoin="round" /></svg>
      </div>
      <div className="ml-[2px] flex">
        {apps.map((a, i) => (
          <div key={i} className="relative flex h-12 w-11 items-center justify-center">
            {a.active && <div className="absolute inset-x-[2px] inset-y-[4px] rounded border border-[#2c3974] bg-[#1e2b6b]" />}
            <div className="relative flex">{a.icon}</div>
            {a.run && <i className={"absolute bottom-[4px] h-[3px] rounded-full " + (a.active ? "w-4 bg-[#d2b67c]" : "w-[6px] bg-[#9093ad]")} />}
          </div>
        ))}
      </div>
      <div className="ml-auto flex items-center">
        <ChevronUp size={16} strokeWidth={2.200} />
        <span className="relative ml-[16px]"><Cloud size={16} fill="#b9c0cc" color="#b9c0cc" /><i className="absolute -bottom-[3px] -right-[2px] size-[10px] rounded-full border-2 border-white bg-[#1b79c9]" /></span>
        <Mic size={17} strokeWidth={1.600} color="#cdb887" className="ml-4" />
        <Wifi size={18} strokeWidth={2} className="ml-[14px]" />
        <Volume2 size={17} strokeWidth={1.600} className="ml-[5px]" />
        <svg className="ml-[8px]" width="17" height="15" viewBox="0 0 17 15" fill="none" stroke="#fff" strokeWidth="1.300"><rect x="2" y="4" width="12" height="8.500" rx="2" /><rect x="5" y="6.500" width="7" height="3.500" fill="#fff" stroke="none" /><path d="M15.700 6.500v3.500" strokeWidth="1.600" /><path d="M3.500.500 1 4.500h3.500L2.500 8" strokeWidth="1.400" /></svg>
        <div className="ml-[14px] flex w-[57px] flex-col items-end text-xs leading-4"><Fit w={43}>6:52 PM</Fit><Fit w={55}>5/19/2023</Fit></div>
        <span className="ml-[6px] mr-4 flex size-[19px] items-center justify-center rounded-full bg-[#cdb27c] text-[10.500px] text-black">46</span>
      </div>
    </div>
  );
}

export default function App() {
  return (
    <div className="flex h-[1170px] w-[1918px] flex-col overflow-hidden bg-black font-['Noto_Sans','Open_Sans',sans-serif]">
      <TabStrip />
      <AddressRow />
      <Bookmarks />
      <main className="relative h-[929px] shrink-0 bg-[#13171c]">
        <Drawing />
        <BoardControls />
      </main>
      <Taskbar />
    </div>
  );
}
